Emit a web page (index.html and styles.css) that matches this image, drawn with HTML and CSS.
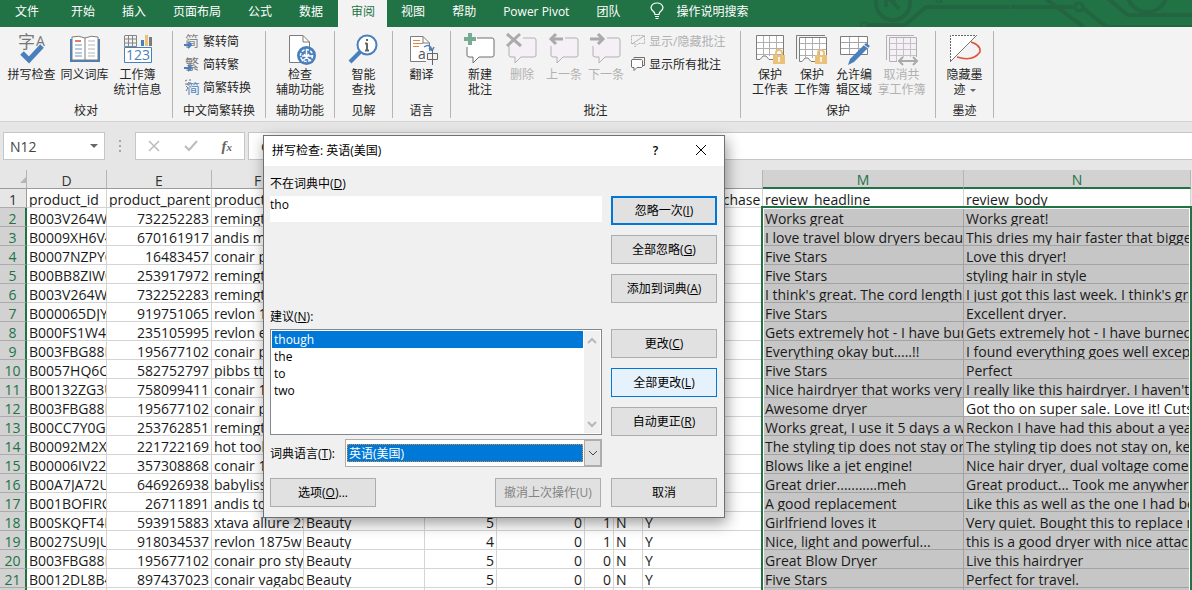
FILE: index.html
```html
<!DOCTYPE html>
<html lang="zh-CN">
<head>
<meta charset="utf-8">
<title>拼写检查</title>
<link rel="stylesheet" href="styles.css">
</head>
<body>
<svg class="defs" aria-hidden="true">
  <symbol id="comment" viewBox="0 0 32 32"><path d="M7 5H28Q30 5 30 7V22Q30 24 28 24H15L9 30V24H5Q3 24 3 22V13" fill="#fff"/><path d="M13 5H28Q30 5 30 7V22Q30 24 28 24H15L9 30V24H5Q3 24 3 22V14" fill="none" stroke="#6f6f6f"/></symbol>
  <symbol id="comment-off" viewBox="0 0 32 32"><path d="M7 5H28Q30 5 30 7V22Q30 24 28 24H15L9 30V24H5Q3 24 3 22V7Q3 5 5 5Z" fill="#f4f0f5"/><path d="M17 5H28Q30 5 30 7V22Q30 24 28 24H15L9 30V24H5Q3 24 3 22V13" fill="none" stroke="#b3b0b3"/></symbol>
  <symbol id="lock" viewBox="0 0 14 17"><path d="M4 8V5Q4 2 7 2T10 5V8" fill="none" stroke="#ebc17a" stroke-width="2"/><rect x="1" y="7" width="12" height="9" fill="#ebc17a"/><path d="M7 10V14M6 10H8" stroke="#fff" stroke-width="1.5"/></symbol>
</svg>

<div class="window">
  <nav class="tabs">
    <svg class="circuit" viewBox="0 0 332 27" aria-hidden="true" fill="none" stroke="#246541" stroke-width="4">
      <circle cx="33" cy="3" r="17"/><path d="M26 7V-4M28-3L39 9M28-1H36"/><circle cx="4" cy="25" r="3" stroke-width="2"/><path d="M8 25H45L66 7H150"/><circle cx="219" cy="7" r="4" stroke-width="3"/><path d="M182-4L224 27M151 7H213M223 8L240 22L247 27H332M246-3L268 15H332M193 7"/><circle cx="287" cy="-8" r="20"/><circle cx="79" cy="-1" r="3" stroke-width="2"/></svg>
    <button class="tab file">文件</button><button class="tab">开始</button><button class="tab">插入</button><button class="tab">页面布局</button><button class="tab">公式</button><button class="tab">数据</button><button class="tab active">审阅</button><button class="tab">视图</button><button class="tab">帮助</button><button class="tab">Power Pivot</button><button class="tab">团队</button>
    <button class="tab tell"><svg width="14" height="18" viewBox="0 0 14 18" fill="none" stroke="#fff" stroke-width="1.2"><path d="M5 12.500Q5 10.500 3 9Q1 7.500 1 5.500Q2 1 7 1T13 5.500Q13 7.500 11 9Q9 10.500 9 12.500ZM5 14.500H9M5.500 16.500H8.500"/></svg>操作说明搜索</button>
  </nav>

  <div class="ribbon">
    <section class="group proof">
      <div class="tools">
        <button class="tool"><svg viewBox="0 0 32 32"><text x="2" y="15" font-size="17" fill="#777">字</text><text x="20" y="13" font-size="14" fill="#777">A</text><path d="M6 20L13 27L26 13" fill="none" stroke="#4a7fbd" stroke-width="5"/></svg>拼写检查</button>
        <button class="tool"><svg viewBox="0 0 32 32"><path d="M1 6H31V29H1Z" fill="#4a7fbd"/><path d="M3 4Q10 2 16 5Q22 2 29 4V27H3Z" fill="#fff" stroke="#7d7d7d"/><path d="M16 5V27" stroke="#7d7d7d"/><path d="M6 8H12" stroke="#d65532" stroke-width="1.500"/><path d="M6 12H13M6 16H13M6 20H13M6 23H13" stroke="#7294bb"/><path d="M19 8H26M19 12H26M19 16H26M19 20H26M19 23H26" stroke="#b5b5b5"/></svg>同义词库</button>
        <button class="tool"><svg viewBox="0 0 32 32"><path d="M3 2.500H14.500V13.500H2.500V2.500M2.500 6H14M2.500 10H14M6.500 2V14M10.500 2V14" fill="none" stroke="#858585"/><path d="M19 7H22V13H19Z" fill="#4a7fbd"/><path d="M23 2H26V13H23Z" fill="#ebc17a"/><path d="M27 4H30V13H27Z" fill="#7a7a7a"/><path d="M2.500 14.500H29.500V29.500H2.500Z" fill="#fff" stroke="#4a7fbd"/><text x="4" y="27" font-size="14" fill="#4a7fbd">123</text></svg>工作簿<br>统计信息</button>
      </div>
      <h2>校对</h2>
    </section>
    <section class="group chinese">
      <div class="rows">
        <button class="mini"><svg viewBox="0 0 16 16"><text x="1" y="13" font-size="14" fill="#888">简</text><path d="M0 12H6M4 9L7 12L4 15" fill="none" stroke="#4a7fbd" stroke-width="2"/></svg>繁转简</button>
        <button class="mini"><svg viewBox="0 0 16 16"><text x="1" y="13" font-size="14" fill="#777">繁</text><path d="M0 12H6M4 9L7 12L4 15" fill="none" stroke="#4a7fbd" stroke-width="2"/></svg>简转繁</button>
        <button class="mini"><svg viewBox="0 0 16 16"><path d="M1 2L3 1M5 1H7M1 5H4M2 7L4 9M5 3L3 6M4 9L2 12" fill="none" stroke="#777"/><text x="3" y="14" font-size="13" fill="#4a7fbd">简</text></svg>简繁转换</button>
      </div>
      <h2>中文简繁转换</h2>
    </section>
    <section class="group access">
      <div class="tools">
        <button class="tool"><svg viewBox="0 0 32 32"><path d="M5.500 2.500H19L25.500 9V29.500H5.500Z" fill="#fff" stroke="#7d7d7d"/><path d="M19 2.500V9H25.500" fill="none" stroke="#7d7d7d"/><circle cx="22.500" cy="22.500" r="9.500" fill="#4a7fbd"/><circle cx="22.500" cy="22.500" r="6" fill="none" stroke="#fff" stroke-width="1.500" stroke-dasharray="3 1.500"/><path d="M22.500 16V26M20 21L22.500 24L25 21M18 23H29M22 25L18 28M23 25L27 28" fill="none" stroke="#fff" stroke-width="1.500"/></svg>检查<br>辅助功能</button>
      </div>
      <h2>辅助功能</h2>
    </section>
    <section class="group insight">
      <div class="tools">
        <button class="tool"><svg viewBox="0 0 32 32"><path d="M2 29L12 19" stroke="#4a7fbd" stroke-width="4"/><circle cx="19" cy="12" r="9.500" fill="#fff" stroke="#4a7fbd" stroke-width="2"/><path d="M19 10V18M17 10.500H19M17 17.500H21" stroke="#666" stroke-width="2" fill="none"/><path d="M18 6H20V8H18Z" fill="#666"/></svg>智能<br>查找</button>
      </div>
      <h2>见解</h2>
    </section>
    <section class="group lang">
      <div class="tools">
        <button class="tool"><svg viewBox="0 0 32 32"><path d="M4.500 3.500H17L23.500 10V28.500H4.500Z" fill="#fff" stroke="#7d7d7d"/><path d="M17 3.500V10H23.500" fill="none" stroke="#7d7d7d"/><path d="M7 7.500H14M7 10.500H17M7 13.500H13" stroke="#e08744"/><path d="M18 14Q24 10 26 17M23 15L26 18L28 14" fill="none" stroke="#4a7fbd" stroke-width="1.500"/><path d="M20 18H32V31H20Z" fill="#f3f3f3"/><text x="12" y="26" font-size="14" fill="#555">a</text><path d="M21.500 20.500H31.500V26.500H21.500ZM26.500 17V32" fill="none" stroke="#666"/></svg>翻译</button>
      </div>
      <h2>语言</h2>
    </section>
    <section class="group comments">
      <div class="tools">
        <button class="tool"><svg viewBox="0 0 32 32"><use href="#comment"/><path d="M6 0V12M0 6H12" stroke="#78aa94" stroke-width="4"/></svg>新建<br>批注</button>
        <button class="tool" disabled><svg viewBox="0 0 32 32"><use href="#comment-off"/><path d="M1 1L15 13M14 1L1 13" stroke="#aaa" stroke-width="3"/></svg>删除</button>
        <button class="tool" disabled><svg viewBox="0 0 32 32"><use href="#comment-off"/><path d="M15 6H3M8 1L3 6L8 11" fill="none" stroke="#aaa" stroke-width="3"/></svg>上一条</button>
        <button class="tool" disabled><svg viewBox="0 0 32 32"><use href="#comment-off"/><path d="M0 6H12M8 1L13 6L8 11" fill="none" stroke="#aaa" stroke-width="3"/></svg>下一条</button>
      </div>
      <div class="rows">
        <button class="mini" disabled><svg viewBox="0 0 16 16"><path d="M1.500 10.500V2.500H14.500V10.500H8L5 14V10.500H1.500" fill="none" stroke="#b3b3b3" stroke-dasharray="2 1"/><path d="M2 11L14 3" stroke="#b3b3b3"/></svg>显示/隐藏批注</button>
        <button class="mini"><svg viewBox="0 0 16 16"><path d="M4 2.500V1.500H14.500V9.500H13" fill="none" stroke="#6f6f6f"/><path d="M2 3.500H11.500L12.500 4.500V10.500L11.500 11.500H7L4 14.500V11.500H2L1.500 11V4Z" fill="#fff" stroke="#6f6f6f"/></svg>显示所有批注</button>
      </div>
      <h2>批注</h2>
    </section>
    <section class="group protect">
      <div class="tools">
        <button class="tool"><svg viewBox="0 0 32 32"><path d="M2.500 2.500H29.500V26.500H15L12 23H9L6 26.500H2.500Z" fill="#fff" stroke="#7d7d7d"/><path d="M3 9.500H29M3 15.500H29M3 21.500H29M9.500 3V23M15.500 3V23M22.500 3V23" stroke="#b0b0b0" fill="none"/><use href="#lock" x="18" y="15" width="14" height="17"/></svg>保护<br>工作表</button>
        <button class="tool"><svg viewBox="0 0 32 32"><path d="M0.500 26V2.500H29" fill="none" stroke="#7d7d7d"/><path d="M3.500 4.500H30.500V28.500H15L12 25H9L6 28.500H3.500Z" fill="#fff" stroke="#7d7d7d"/><path d="M4 10.500H30M4 16.500H30M4 22.500H30M9.500 5V25M16.500 5V25M23.500 5V25" stroke="#b0b0b0" fill="none"/><use href="#lock" x="18" y="15" width="14" height="17"/></svg>保护<br>工作簿</button>
        <button class="tool"><svg viewBox="0 0 32 32"><path d="M2.500 3.500H29.500V21.500H2.500Z" fill="#fff" stroke="#7d7d7d"/><path d="M3 9.500H29M3 15.500H29M11.500 4V21M20.500 4V21" stroke="#a5a5a5"/><path d="M10 32L12 26L28 10L32 13L16 29Z" fill="#4a7fbd"/><path d="M26 12L30 15" stroke="#f3f3f3"/></svg>允许编<br>辑区域</button>
        <button class="tool wide" disabled><svg viewBox="0 0 32 32"><path d="M0.500 27V2.500H28" fill="none" stroke="#b3b0b3"/><path d="M3.500 4.500H30.500V28.500H3.500Z" fill="#f4f0f5" stroke="#b3b0b3"/><path d="M4 10.500H30M4 16.500H30M4 22.500H30M10.500 5V28M17.500 5V28M24.500 5V28" stroke="#c5c2c5"/><path d="M11 24H32V31H11Z" fill="#f3f3f3"/><path d="M13 28H31M17 24L13 28L17 32M27 24L31 28L27 32" fill="none" stroke="#aaa" stroke-width="2"/></svg>取消共<br>享工作簿</button>
      </div>
      <h2>保护</h2>
    </section>
    <section class="group ink">
      <div class="tools">
        <button class="tool"><svg viewBox="0 0 32 32"><path d="M1 2H27L1 29Z" fill="#fff"/><path d="M1.500 28V2.500H27" fill="none" stroke="#666" stroke-dasharray="2 1"/><path d="M22 9Q32 12 31 19Q24 29 8 24" fill="none" stroke="#db5333" stroke-width="1.500"/><path d="M1 29L28 2" stroke="#777"/></svg>隐藏墨<br>迹<i class="caret"></i></button>
      </div>
      <h2>墨迹</h2>
    </section>
  </div>

  <div class="formula">
    <button class="name">N12<i class="caret"></i></button>
    <span class="dots"><i></i><i></i><i></i></span>
    <div class="fx"><button aria-label="取消"><svg width="12" height="12" viewBox="0 0 12 12"><path d="M1 1L11 11M11 1L1 11" stroke="#bcbcbc" stroke-width="1.500"/></svg></button><button aria-label="输入"><svg width="14" height="12" viewBox="0 0 14 12"><path d="M1 6L5 10L13 1" fill="none" stroke="#bcbcbc" stroke-width="2"/></svg></button><button class="fn">f<small>x</small></button></div>
    <input class="entry" aria-label="编辑栏" value="Got tho">
  </div>

  <div class="sheet">
    <table>
      <colgroup><col class="c-row"><col class="c-d"><col class="c-e"><col class="c-f"><col class="c-g"><col class="c-h"><col class="c-i"><col class="c-j"><col class="c-k"><col class="c-l"><col class="c-m"><col></colgroup>
      <thead><tr><th class="corner"><svg width="7" height="7" viewBox="0 0 7 7"><path d="M7 0V7H0Z" fill="#b5b5b5"/></svg></th><th>D</th><th>E</th><th>F</th><th>G</th><th>H</th><th>I</th><th>J</th><th>K</th><th>L</th><th class="on">M</th><th class="on">N</th></tr></thead>
      <tbody>
      <tr class="first"><th>1<td>product_id<td class="text">product_parent<td>product_title<td><td><td><td><td><td>verified_purchase<td>review_headline<td>review_body
      <tr><th>2<td>B003V264WW<td>732252283<td>remington ac2015<td><td><td><td><td><td><td>Works great<td>Works great!
      <tr><th>3<td>B0009XH6V4<td>670161917<td>andis micro turbo<td><td><td><td><td><td><td>I love travel blow dryers because<td>This dries my hair faster that bigger
      <tr><th>4<td>B0007NZPY6<td>16483457<td>conair pro hair<td><td><td><td><td><td><td>Five Stars<td>Love this dryer!
      <tr><th>5<td>B00BB8ZIW0<td>253917972<td>remington silk<td><td><td><td><td><td><td>Five Stars<td>styling hair in style
      <tr><th>6<td>B003V264WW<td>732252283<td>remington ac2015<td><td><td><td><td><td><td>I think's great. The cord length<td>I just got this last week. I think's great
      <tr><th>7<td>B000065DJY<td>919751065<td>revlon 1875w<td><td><td><td><td><td><td>Five Stars<td>Excellent dryer.
      <tr><th>8<td>B000FS1W4U<td>235105995<td>revlon essentials<td><td><td><td><td><td><td>Gets extremely hot - I have burned<td>Gets extremely hot - I have burned
      <tr><th>9<td>B003FBG88E<td>195677102<td>conair pro styler<td><td><td><td><td><td><td>Everything okay but.....!!<td>I found everything goes well except
      <tr><th>10<td>B0057HQ6OC<td>582752797<td>pibbs ttpro<td><td><td><td><td><td><td>Five Stars<td>Perfect
      <tr><th>11<td>B00132ZG3U<td>758099411<td>conair 1875<td><td><td><td><td><td><td>Nice hairdryer that works very well<td>I really like this hairdryer. I haven't had
      <tr><th>12<td>B003FBG88E<td>195677102<td>conair pro styler<td><td><td><td><td><td><td>Awesome dryer<td class="current">Got tho on super sale. Love it! Cuts
      <tr><th>13<td>B00CC7Y0G4<td>253762851<td>remington pro<td><td><td><td><td><td><td>Works great, I use it 5 days a week<td>Reckon I have had this about a year
      <tr><th>14<td>B00092M2XU<td>221722169<td>hot tools<td><td><td><td><td><td><td>The styling tip does not stay on<td>The styling tip does not stay on, keeps
      <tr><th>15<td>B00006IV22<td>357308868<td>conair 1875<td><td><td><td><td><td><td>Blows like a jet engine!<td>Nice hair dryer, dual voltage comes
      <tr><th>16<td>B00A7JA72U<td>646926938<td>babyliss pro<td><td><td><td><td><td><td>Great drier...........meh<td>Great product... Took me anywhere
      <tr><th>17<td>B001BOFIRC<td>26711891<td>andis tools<td><td><td><td><td><td><td>A good replacement<td>Like this as well as the one I had before
      <tr><th>18<td>B00SKQFT4I<td>593915883<td>xtava allure 2200w<td>Beauty<td>5<td>0<td>1<td>N<td>Y<td>Girlfriend loves it<td>Very quiet. Bought this to replace my
      <tr><th>19<td>B0027SU9JU<td>918034537<td>revlon 1875w<td>Beauty<td>4<td>0<td>1<td>N<td>Y<td>Nice, light and powerful...<td>this is a good dryer with nice attachments
      <tr><th>20<td>B003FBG88E<td>195677102<td>conair pro styler<td>Beauty<td>5<td>0<td>0<td>N<td>Y<td>Great Blow Dryer<td>Live this hairdryer
      <tr><th>21<td>B0012DL8B4<td>897437023<td>conair vagabond<td>Beauty<td>5<td>0<td>0<td>N<td>Y<td>Five Stars<td>Perfect for travel.
      <tr><th><td><td><td><td><td><td><td><td><td><td><td>
      </tbody>
    </table>
    <div class="selection"></div>
  </div>

  <div class="dialog" role="dialog" aria-labelledby="dialog-title">
    <header><h1 id="dialog-title">拼写检查: 英语(美国)</h1><button aria-label="帮助">?</button><button aria-label="关闭"><svg width="12" height="12" viewBox="0 0 12 12"><path d="M1 1L11 11M11 1L1 11" stroke="#000"/></svg></button></header>
    <div class="panel">
      <div class="left">
        <label for="word">不在词典中(<u>D</u>)</label>
        <textarea id="word" readonly>tho</textarea>
      </div>
      <div class="right">
        <button class="push default">忽略一次(<u>I</u>)</button>
        <button class="push">全部忽略(<u>G</u>)</button>
        <button class="push">添加到词典(<u>A</u>)</button>
      </div>
      <div class="left suggest">
        <span class="caption" id="suggest">建议(<u>N</u>):</span>
        <div class="list">
          <ul role="listbox" aria-labelledby="suggest"><li role="option" aria-selected="true">though</li><li role="option">the</li><li role="option">to</li><li role="option">two</li></ul>
          <div class="scroll"><svg width="10" height="8" viewBox="0 0 10 8"><path d="M1 6L5 2L9 6" fill="none" stroke="#b8b8b8" stroke-width="2"/></svg><svg width="10" height="8" viewBox="0 0 10 8"><path d="M1 2L5 6L9 2" fill="none" stroke="#b8b8b8" stroke-width="2"/></svg></div>
        </div>
      </div>
      <div class="right second">
        <button class="push">更改(<u>C</u>)</button>
        <button class="push hover">全部更改(<u>L</u>)</button>
        <button class="push">自动更正(<u>R</u>)</button>
      </div>
    </div>
    <div class="language">
      <label for="lang">词典语言(<u>T</u>):</label>
      <div class="combo"><select id="lang"><option>英语(美国)</option></select><span class="arrow"><svg width="10" height="8" viewBox="0 0 10 8"><path d="M1 2L5 6L9 2" fill="none" stroke="#444"/></svg></span></div>
    </div>
    <footer><button class="push options">选项(<u>O</u>)...</button><button class="push" disabled>撤消上次操作(U)</button><button class="push">取消</button></footer>
  </div>
</div>
</body>
</html>
```

FILE: styles.css
```css
* { box-sizing: border-box; }

body {
  margin: 0;
  background: #e6e6e6;
  font: 12px/15px "Open Sans", "Noto Sans CJK SC", sans-serif;
  color: #262626;
}

button, input, select, textarea { font: inherit; color: inherit; margin: 0; }
button { padding: 0; border: 0; background: none; white-space: nowrap; }
h1, h2 { margin: 0; font: inherit; }
svg { display: block; flex: none; }
.defs { position: absolute; width: 0; height: 0; }

.window {
  position: relative;
  display: flex;
  flex-direction: column;
  height: 100vh;
  overflow: hidden;
}

/* tabs */
.tabs {
  position: relative;
  display: flex;
  flex: none;
  gap: 1px;
  height: 27px;
  background: #217346;
  color: #fff;
}
.circuit { position: absolute; right: 0; top: 0; width: 332px; height: 27px; }
.tab { padding: 0 13px 5px; }
.tab.file { padding: 0 18px 5px 15px; }
.tab.active { margin-left: 1px; padding: 0 12px 5px 13px; background: #f3f3f3; color: #217346; }
.tab.tell { display: flex; align-items: center; gap: 12px; padding: 0 15px 5px 16px; }

/* ribbon */
.ribbon {
  display: flex;
  flex: none;
  padding: 4px 0 3px;
  background: #f3f3f3;
  border-bottom: 1px solid #d2d2d2;
}
.group {
  display: grid;
  grid-template-columns: auto 1fr;
  grid-template-rows: 72px 15px;
  border-right: 1px solid #b4b4b4;
}
.group h2 { grid-column: 1 / -1; text-align: center; white-space: nowrap; }
.tools { display: flex; align-items: flex-start; grid-column: 1; }
.tool { width: 42px; padding-top: 2px; display: block; }
.tool svg { width: 32px; height: 32px; margin: 0 auto 2px; overflow: visible; }
.tool.wide { width: 53px; }
.rows { display: flex; flex-direction: column; gap: 5px; padding-top: 1px; }
.mini { display: flex; align-items: center; gap: 3px; height: 18px; }
.mini svg { width: 16px; height: 16px; overflow: visible; }
button:disabled { color: #b1b1b1; }
.caret {
  display: inline-block;
  margin-left: 4px;
  vertical-align: 2px;
  border: 3px solid transparent;
  border-top-color: #666;
  border-bottom: 0;
}

.proof { width: 173px; }
.proof .tools { padding-left: 5px; }
.proof .tool { width: 53px; }
.chinese { width: 93px; }
.chinese .rows { padding-left: 11px; }
.access { width: 69px; }
.access .tool { width: 68px; }
.insight, .lang, .ink { width: 58px; }
.insight .tool, .lang .tool, .ink .tool { width: 57px; }
.comments { width: 290px; }
.comments .tools { padding-left: 8px; }
.comments .rows { padding-left: 3px; }
.protect { width: 195px; }
.protect .tools { padding-left: 8px; }

/* formula bar */
.formula { display: flex; flex: none; height: 48px; padding: 10px 0 10px 3px; font-size: 14px; }
.name {
  display: flex;
  align-items: center;
  justify-content: space-between;
  width: 102px;
  padding: 0 6px;
  background: #fff;
  border: 1px solid #c6c6c6;
  color: #444;
}
.name .caret { border-width: 4px 4px 0; }
.dots { display: flex; flex-direction: column; justify-content: center; align-items: center; gap: 3px; width: 30px; }
.dots i { width: 2px; height: 2px; background: #a5a5a5; }
.fx { display: flex; align-items: center; justify-content: space-around; width: 110px; background: #fff; border: 1px solid #c6c6c6; }
.fn { font: italic bold 15px/16px "Liberation Serif", serif; color: #666; }
.fn small { font-size: 11px; }
.entry { flex: 1; min-width: 0; margin-left: 3px; padding: 0 12px; border: 1px solid #c6c6c6; border-right: 0; background: #fff; }

/* worksheet */
.sheet { position: relative; flex: 1; padding-right: 1px; }
table { width: 100%; table-layout: fixed; border-spacing: 0; font-size: 14px; line-height: 15px; color: #1a1a1a; }
.c-row { width: 27px; }
.c-d { width: 80px; }
.c-e { width: 105px; }
.c-f { width: 92px; }
.c-g { width: 121px; }
.c-h { width: 72px; }
.c-i { width: 88px; }
.c-j, .c-k { width: 29px; }
.c-l { width: 120px; }
.c-m { width: 201px; }
th, td { height: 19px; padding: 3px 2px 0; overflow: hidden; white-space: nowrap; font-weight: 400; }
td { background: #fff; border-right: 1px solid #d4d4d4; border-bottom: 1px solid #d4d4d4; }
td:nth-child(3), td:nth-child(6), td:nth-child(7), td:nth-child(8) { text-align: right; }
td.text { text-align: left; }
.first td { padding-top: 2px; }
thead th { background: #e6e6e6; border-right: 1px solid #b5b5b5; border-bottom: 1px solid #9b9b9b; color: #333; }
thead th.on { background: #d2d2d2; color: #217346; border-bottom: 2px solid #217346; line-height: 14px; }
thead th.corner { padding: 0 0 0 20px; }
tbody th { background: #d2d2d2; border-right: 2px solid #217346; border-bottom: 1px solid #ababab; color: #217346; }
.first th { background: #e6e6e6; border-right: 1px solid #9b9b9b; color: #333; }
tr:not(.first) td:nth-child(n+11) { background: #c6c6c6; border-color: #a3a3a3; }
tr:not(.first) td.current { background: #fff; }
.selection {
  position: absolute;
  left: 761px;
  right: 0;
  top: 36px;
  bottom: -4px;
  border: 2px solid #217346;
  box-shadow: inset 0 0 0 1px #fff;
}

/* dialog */
.dialog {
  position: absolute;
  left: 263px;
  top: 135px;
  width: 462px;
  padding-bottom: 10px;
  background: #f0f0f0;
  border: 1px solid #707070;
  box-shadow: 2px 5px 14px rgba(0, 0, 0, .4);
  color: #000;
}
.dialog header { display: flex; align-items: center; height: 30px; padding: 0 1px 2px 8px; background: #fff; }
.dialog h1 { flex: 1; }
.dialog header button { display: flex; align-items: center; justify-content: center; width: 45px; height: 28px; font-weight: 600; }
.panel { display: grid; grid-template-columns: 1fr 106px; column-gap: 9px; padding: 10px 7px 0 6px; }
.left { display: flex; flex-direction: column; }
.left label, .caption { height: 20px; line-height: 16px; }
.left textarea { height: 26px; padding: 1px 0; border: 0; background: #fff; resize: none; outline: 0; overflow: hidden; }
.right { display: flex; flex-direction: column; gap: 10px; padding-top: 20px; }
.push { width: 106px; height: 29px; background: #e1e1e1; border: 1px solid #adadad; }
.push:disabled { color: #838383; background: #e1e1e1; }
.push.default { border: 2px solid #0078d7; }
.push.hover { background: #e5f1fb; border-color: #0078d7; }
.suggest { padding-top: 6px; }
.right.second { padding-top: 26px; }
.list { display: flex; height: 106px; padding: 1px; background: #fff; border: 1px solid #828790; }
.list ul { flex: 1; margin: 0; padding: 0; list-style: none; line-height: 17px; }
.list li { padding-left: 2px; }
.list li[aria-selected] { background: #0078d7; color: #fff; }
.scroll { display: flex; flex-direction: column; justify-content: space-between; align-items: center; width: 17px; padding: 6px 0 5px; background: #f0f0f0; border-left: 1px solid #fff; }
.language { display: flex; align-items: center; padding: 3px 122px 0 6px; }
.language label { width: 75px; }
.combo { display: flex; flex: 1; height: 28px; background: #fff; border: 1px solid #adadad; }
.combo select { flex: 1; height: 18px; margin: 4px 1px; padding: 0 1px; appearance: none; background: #0078d7; border: 1px dotted #e08a3a; border-radius: 0; color: #fff; line-height: 15px; }
.arrow { display: flex; align-items: center; justify-content: center; width: 17px; background: #e1e1e1; border: 1px solid #adadad; }
.dialog footer { display: flex; gap: 10px; padding: 11px 7px 0 6px; }
.options { margin-right: auto; }
```
